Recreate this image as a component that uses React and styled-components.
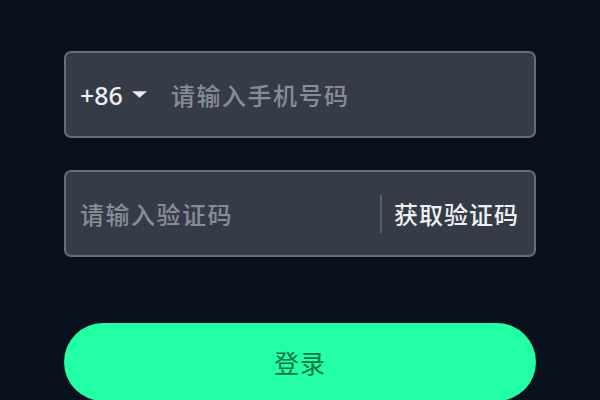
import styled, { createGlobalStyle } from "styled-components";

const GlobalStyle = createGlobalStyle`
  html, body {
    margin: 0;
    padding: 0;
    background: #0a111e;
  }
  body {
    font-family: "Noto Sans", "Noto Sans CJK SC", sans-serif;
  }
`;

export default function App() {
  return (
    <>
      <GlobalStyle />
      <Page>
        <Field>
          <Prefix>
            +86
            <Caret viewBox="0 0 16 8">
              <path d="M0 0 L16 0 L8 7 Z" fill="#e9ebee" />
            </Caret>
          </Prefix>
          <Placeholder>请输入手机号码</Placeholder>
        </Field>
        <Field>
          <Placeholder>请输入验证码</Placeholder>
          <Divider />
          <CodeButton>获取验证码</CodeButton>
        </Field>
        <Login>登录</Login>
      </Page>
    </>
  );
}

const Page = styled.div`
  height: 400px;
  overflow: hidden;
  box-sizing: border-box;
  padding: 51px 64px 0;
  display: flex;
  flex-direction: column;
`;

const Field = styled.div`
  box-sizing: border-box;
  flex-shrink: 0;
  height: 87px;
  margin-bottom: 32px;
  border: 2px solid #676d78;
  border-radius: 7px;
  background: #353c48;
  display: flex;
  align-items: center;
  padding: 0 15px 0 14px;
  font-size: 24px;
  font-weight: 500;
`;

const Prefix = styled.div`
  color: #eceef1;
  font-size: 25px;
  display: flex;
  align-items: center;
  gap: 9px;
  margin-right: 24px;
`;

const Caret = styled.svg`
  width: 15px;
  height: 8px;
`;

const Placeholder = styled.div`
  color: #878d96;
  flex: 1;
  letter-spacing: 1.5px;
`;

const Divider = styled.div`
  width: 2px;
  height: 38px;
  background: #59606b;
  margin-right: 12px;
`;

const CodeButton = styled.div`
  color: #eef0f2;
  letter-spacing: 1px;
`;

const Login = styled.div`
  margin-top: 34px;
  height: 78px;
  flex-shrink: 0;
  border-radius: 39px;
  background: #22ffa4;
  color: #0c7548;
  font-size: 25px;
  display: flex;
  align-items: center;
  justify-content: center;
  letter-spacing: 1px;
`;
